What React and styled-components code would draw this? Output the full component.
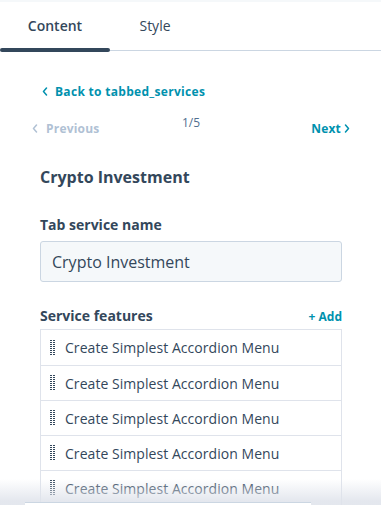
import React from "react";
import styled, { createGlobalStyle } from "styled-components";

const Global = createGlobalStyle`
  html, body { margin: 0; padding: 0; background: #fff; }
  body { font-family: "Open Sans", "Noto Sans", sans-serif; color: #33475b; }
  * { box-sizing: border-box; }
`;

const Page = styled.div`
  position: relative;
  width: 381px;
  height: 505px;
  overflow: hidden;
  border-top: 2px solid #f5f8fa;
`;

const Tabs = styled.div`
  display: flex;
  height: 49px;
  border-bottom: 1px solid #cbd6e2;
`;

const Tab = styled.div`
  position: relative;
  width: ${(p) => p.$w}px;
  display: flex;
  align-items: center;
  justify-content: center;
  padding-bottom: 2px;
  font-size: 14px;
  font-weight: ${(p) => (p.$active ? 600 : 400)};
  color: #33475b;
  &::after {
    content: "";
    display: ${(p) => (p.$active ? "block" : "none")};
    position: absolute;
    left: 0;
    right: 0;
    bottom: -2px;
    height: 4px;
    border-radius: 2px;
    background: #33475b;
  }
`;

const Body = styled.div`
  padding: 30px 39px 0 40px;
  display: flex;
  flex-direction: column;
`;

const BackLink = styled.div`
  display: flex;
  align-items: center;
  gap: 7px;
  margin-left: 2px;
  font-size: 12px;
  font-weight: 700;
  letter-spacing: 0.3px;
  color: #0091ae;
  height: 20px;
`;

const Pager = styled.div`
  display: grid;
  grid-template-columns: 1fr auto 1fr;
  align-items: start;
  margin: 14px -8px 0 -8px;
  height: 22px;
`;

const PagerLink = styled.div`
  display: flex;
  align-items: center;
  justify-content: ${(p) => (p.$end ? "flex-end" : "flex-start")};
  gap: ${(p) => (p.$end ? 3 : 8)}px;
  font-size: 12px;
  font-weight: 700;
  letter-spacing: 0.2px;
  color: ${(p) => (p.$disabled ? "#b0c1d4" : "#0091ae")};
  margin-top: 5px;
`;

const Count = styled.div`
  font-size: 12px;
  color: #516f90;
  line-height: 16px;
`;

const Heading = styled.div`
  font-size: 16px;
  font-weight: 700;
  margin-top: 29px;
  line-height: 22px;
`;

const Label = styled.div`
  font-size: 14px;
  font-weight: 700;
  line-height: 20px;
`;

const Field = styled.div`
  margin-top: ${(p) => p.$mt}px;
  display: flex;
  flex-direction: column;
  gap: 6px;
`;

const Input = styled.div`
  height: 41px;
  border: 1px solid #cbd6e2;
  border-radius: 3px;
  background: #f5f8fa;
  display: flex;
  align-items: center;
  padding-left: 11px;
  font-size: 16px;
  color: #33475b;
`;

const HeaderRow = styled.div`
  display: flex;
  justify-content: space-between;
  align-items: center;
`;

const AddLink = styled.div`
  font-size: 12px;
  font-weight: 700;
  color: #0091ae;
`;

const List = styled.div`
  border: 1px solid #dfe3eb;
  margin-top: -3px;
`;

const Row = styled.div`
  height: 35px;
  display: flex;
  align-items: center;
  padding-left: 9px;
  gap: 10px;
  font-size: 14px;
  letter-spacing: 0.05px;
  color: #33475b;
  & + & { border-top: 1px solid #dfe3eb; }
`;

const Fade = styled.div`
  position: absolute;
  left: 0;
  right: 0;
  bottom: 0;
  height: 26px;
  background: linear-gradient(to bottom, rgba(234,240,246,0) 0%, rgba(223,227,235,0.85) 85%);
  display: flex;
  align-items: flex-end;
  justify-content: center;
`;

const FooterCard = styled.div`
  width: 286px;
  height: 3px;
  margin-left: -46px;
  background: #fff;
  border-top: 1px solid #cbd6e2;
`;

const Chevron = ({ dir = "left", color }) => (
  <svg width="6" height="9" viewBox="0 0 6 9" fill="none">
    <path
      d={dir === "left" ? "M4.5 1 L1.5 4.5 L4.5 8" : "M1.5 1 L4.5 4.5 L1.5 8"}
      stroke={color}
      strokeWidth="1.5"
      strokeLinecap="round"
      strokeLinejoin="round"
    />
  </svg>
);

const Grip = () => (
  <svg width="5" height="16" viewBox="0 0 5 16" shapeRendering="crispEdges">
    {[0, 1, 2, 3, 4, 5, 6, 7].map((r) =>
      [0, 1].map((c) => (
        <rect key={`${r}-${c}`} x={c * 3} y={r * 2} width="2" height="1" fill="#33475b" />
      ))
    )}
  </svg>
);

export default function App() {
  const items = Array.from({ length: 6 }, () => "Create Simplest Accordion Menu");
  return (
    <>
      <Global />
      <Page>
        <Tabs>
          <Tab $w={110} $active>Content</Tab>
          <Tab $w={90}>Style</Tab>
        </Tabs>
        <Body>
          <BackLink>
            <Chevron color="#0091ae" />
            Back to tabbed_services
          </BackLink>
          <Pager>
            <PagerLink $disabled>
              <Chevron color="#b0c1d4" />
              Previous
            </PagerLink>
            <Count>1/5</Count>
            <PagerLink $end>
              Next
              <Chevron dir="right" color="#0091ae" />
            </PagerLink>
          </Pager>
          <Heading>Crypto Investment</Heading>
          <Field $mt={27}>
            <Label>Tab service name</Label>
            <Input>Crypto Investment</Input>
          </Field>
          <Field $mt={24}>
            <HeaderRow>
              <Label>Service features</Label>
              <AddLink>+ Add</AddLink>
            </HeaderRow>
            <List>
              {items.map((t, i) => (
                <Row key={i}>
                  <Grip />
                  {t}
                </Row>
              ))}
            </List>
          </Field>
        </Body>
        <Fade>
          <FooterCard />
        </Fade>
      </Page>
    </>
  );
}
